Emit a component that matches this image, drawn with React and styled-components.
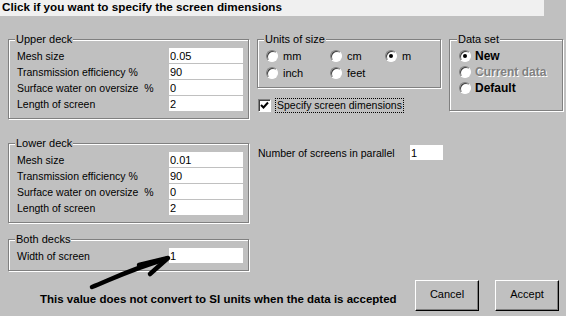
import React from 'react';
import styled, { createGlobalStyle } from 'styled-components';

const GlobalStyle = createGlobalStyle`
  body {
    margin: 0;
    background: #c0c0c0;
    font-family: "Liberation Sans", Arial, sans-serif;
    font-size: 10.5px;
    color: #000;
  }
`;

const App = () => {
  return (
    <Page>
      <GlobalStyle />
      <Banner>Click if you want to specify the screen dimensions</Banner>
      <Main>
        <LeftColumn>
          <DeckGroup title="Upper deck" rows={UPPER_DECK} />
          <DeckGroup title="Lower deck" rows={LOWER_DECK} gap={24} />
          <DeckGroup title="Both decks" rows={BOTH_DECKS} gap={16} />
        </LeftColumn>
        <MiddleColumn>
          <Group>
            <Caption>Units of size</Caption>
            <UnitsGrid>
              {UNITS.map(unit => (
                <RadioItem key={unit.id}>
                  <Radio checked={unit.checked} />
                  {unit.name}
                </RadioItem>
              ))}
            </UnitsGrid>
          </Group>
          <CheckRow>
            <CheckBox>
              <svg width="9" height="9" viewBox="0 0 9 9">
                <path d="M1 4 L3.5 6.5 L8 1.5" fill="none" stroke="#000" strokeWidth="2" />
              </svg>
            </CheckBox>
            <FocusLabel>Specify screen dimensions</FocusLabel>
          </CheckRow>
          <ParallelRow>
            <span>Number of screens in parallel</span>
            <SmallInput defaultValue="1" />
          </ParallelRow>
        </MiddleColumn>
        <RightColumn>
          <DataGroup>
            <Caption>Data set</Caption>
            {DATA_SETS.map(item => (
              <DataItem key={item.id} disabled={item.disabled}>
                <Radio checked={item.checked} />
                {item.name}
              </DataItem>
            ))}
          </DataGroup>
        </RightColumn>
      </Main>
      <Footer>
        <Message>This value does not convert to SI units when the data is accepted</Message>
        <ButtonBar>
          <Button>Cancel</Button>
          <Button>Accept</Button>
        </ButtonBar>
      </Footer>
      <Arrow width="566" height="316" viewBox="0 0 566 316">
        <path d="M92 287 C 108 281, 128 270, 166 259" fill="none" stroke="#000" strokeWidth="4.5" strokeLinecap="round" />
        <path d="M139 265 L 168 258 L 150 274" fill="none" stroke="#000" strokeWidth="4.5" strokeLinecap="round" strokeLinejoin="round" />
      </Arrow>
    </Page>
  );
};

const DeckGroup = ({ title, rows, gap }) => (
  <Group gap={gap}>
    <Caption>{title}</Caption>
    {rows.map(row => (
      <FieldRow key={row.id}>
        <FieldLabel>{row.name}</FieldLabel>
        <FieldInput defaultValue={row.value} />
      </FieldRow>
    ))}
  </Group>
);

export default App;

const Page = styled.div`
  position: relative;
  width: 566px;
  height: 316px;
  overflow: hidden;
`;

const Banner = styled.div`
  width: 542px;
  height: 16px;
  padding-left: 2px;
  background: #f0f0f0;
  font-size: 11.7px;
  font-weight: bold;
  line-height: 14px;
`;

const Main = styled.div`
  display: flex;
  gap: 8px;
  padding: 23px 0 0 8px;
`;

const LeftColumn = styled.div`
  width: 241px;
  display: flex;
  flex-direction: column;
`;

const MiddleColumn = styled.div`
  width: 184px;
  display: flex;
  flex-direction: column;
`;

const RightColumn = styled.div`
  width: 114px;
`;

const Group = styled.div`
  margin-top: ${props => props.gap || 0}px;
  border: 1px solid #808080;
  box-shadow: inset 1px 1px 0 #fff, 1px 1px 0 #fff;
  padding: 0 5px 6px 8px;
`;

const Caption = styled.div`
  width: fit-content;
  height: 13px;
  line-height: 13px;
  margin: -7px 0 2px -2px;
  padding: 0 1px;
  background: #c0c0c0;
  font-size: 11px;
`;

const FieldRow = styled.div`
  display: flex;
  align-items: center;
  justify-content: space-between;
  height: 16px;
`;

const FieldLabel = styled.span`
  white-space: pre;
`;

const FieldInput = styled.input`
  width: 74px;
  height: 15px;
  box-sizing: border-box;
  margin: 0 0 1px;
  padding: 0 1px;
  border: none;
  outline: none;
  background: #fff;
  font-family: "Liberation Sans", Arial, sans-serif;
  font-size: 11px;
`;

const UnitsGrid = styled.div`
  display: grid;
  grid-template-columns: 64px 55px 1fr;
  grid-auto-rows: 17px;
  margin-top: -1px;
`;

const RadioItem = styled.div`
  display: flex;
  align-items: center;
  gap: 5px;
  font-size: 11px;
`;

const Radio = styled.span`
  position: relative;
  box-sizing: border-box;
  width: 12px;
  height: 12px;
  border-radius: 50%;
  background: #fff;
  border: 1px solid;
  border-color: #808080 #fff #fff #808080;
  box-shadow: inset 1px 1px 0 #404040;
  flex-shrink: 0;

  &::after {
    content: '';
    display: ${props => (props.checked ? 'block' : 'none')};
    position: absolute;
    left: 3px;
    top: 3px;
    width: 4px;
    height: 4px;
    border-radius: 50%;
    background: #000;
  }
`;

const CheckRow = styled.div`
  display: flex;
  align-items: center;
  gap: 4px;
  margin-top: 10px;
  height: 15px;
  padding-left: 1px;
`;

const CheckBox = styled.span`
  box-sizing: border-box;
  width: 13px;
  height: 13px;
  display: flex;
  align-items: center;
  justify-content: center;
  background: #fff;
  border: 1px solid;
  border-color: #808080 #fff #fff #808080;
  box-shadow: inset 1px 1px 0 #404040;
`;

const FocusLabel = styled.span`
  border: 1px dotted #000;
  padding: 0 1px;
  line-height: 13px;
  font-size: 10.5px;
`;

const ParallelRow = styled.div`
  display: flex;
  align-items: center;
  justify-content: space-between;
  margin-top: 32px;
  padding-left: 1px;
  width: 185px;
`;

const SmallInput = styled(FieldInput)`
  width: 33px;
  margin: 0;
`;

const DataGroup = styled(Group)`
  height: 64px;
  padding: 0 5px 6px 9px;
`;

const DataItem = styled.div`
  display: flex;
  align-items: center;
  gap: 4px;
  height: 16px;
  font-weight: bold;
  font-size: 12px;
  color: ${props => (props.disabled ? '#808080' : '#000')};
  text-shadow: ${props => (props.disabled ? '1px 1px 0 #fff' : 'none')};
`;

const Footer = styled.div`
  display: flex;
  align-items: center;
  justify-content: space-between;
  margin-top: 9px;
  height: 31px;
`;

const Message = styled.div`
  padding: 6px 0 0 40px;
  font-weight: bold;
  font-size: 11.5px;
`;

const ButtonBar = styled.div`
  display: flex;
  gap: 16px;
  padding-right: 7px;
`;

const Button = styled.button`
  width: 64px;
  height: 31px;
  background: #c0c0c0;
  border: 1px solid;
  border-color: #fff #000 #000 #fff;
  box-shadow: inset -1px -1px 0 #808080;
  font-family: "Liberation Sans", Arial, sans-serif;
  font-size: 11px;
  color: #000;
  padding: 0 0 4px;
`;

const Arrow = styled.svg`
  position: absolute;
  left: 0;
  top: 0;
  pointer-events: none;
`;

const UPPER_DECK = [
  { id: 1, name: 'Mesh size', value: '0.05' },
  { id: 2, name: 'Transmission efficiency %', value: '90' },
  { id: 3, name: 'Surface water on oversize  %', value: '0' },
  { id: 4, name: 'Length of screen', value: '2' },
];

const LOWER_DECK = [
  { id: 1, name: 'Mesh size', value: '0.01' },
  { id: 2, name: 'Transmission efficiency %', value: '90' },
  { id: 3, name: 'Surface water on oversize  %', value: '0' },
  { id: 4, name: 'Length of screen', value: '2' },
];

const BOTH_DECKS = [{ id: 1, name: 'Width of screen', value: '1' }];

const UNITS = [
  { id: 1, name: 'mm' },
  { id: 2, name: 'cm' },
  { id: 3, name: 'm', checked: true },
  { id: 4, name: 'inch' },
  { id: 5, name: 'feet' },
];

const DATA_SETS = [
  { id: 1, name: 'New', checked: true },
  { id: 2, name: 'Current data', disabled: true },
  { id: 3, name: 'Default' },
];
